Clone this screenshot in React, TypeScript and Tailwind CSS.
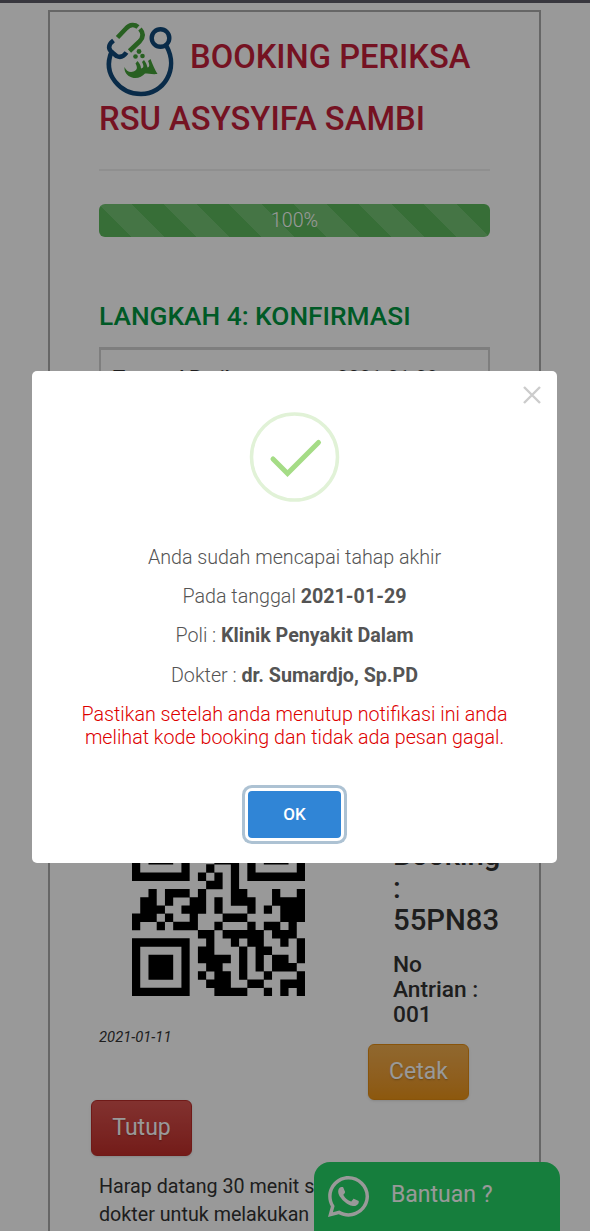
import React from "react";

const QR = [
  "111111100101001111111",
  "100000101010001000001",
  "101110100110101011101",
  "101110101001101011101",
  "101110100011101011101",
  "100000100100101000001",
  "111111101010101111111",
  "000000000110100000000",
  "001011101000110001001",
  "011010011010111001111",
  "011100111010001010111",
  "111010010001110000111",
  "100101110010001011010",
  "000000001101111101110",
  "111111100100101100101",
  "100000101100010110001",
  "101110101111010101101",
  "101110100110010101110",
  "101110101011010010001",
  "100000100111001100111",
  "111111100011110010101",
];

function QrCode() {
  return (
    <svg viewBox="0 0 21 21" className="block size-[173px]">
      <path d={QR.map((row, y) => [...row.matchAll(/1+/g)].map((m) => `M${m.index} ${y}h${m[0].length}v1.03h-${m[0].length}z`).join("")).join("")} />
    </svg>
  );
}

function Logo() {
  return (
    <svg viewBox="0 0 90 90" className="block size-[90px] shrink-0" fill="none">
      <path d="M16.500 37C7 60 26 79 46 79C69 79 84 54 71.500 31" stroke="#10497a" strokeWidth="4.600" />
      <circle cx="65.500" cy="23" r="8.800" stroke="#10497a" strokeWidth="4.400" />
      <path d="M18.500 25.500C12.500 30 13 35 18 38L21.500 41C25.500 43 29 41 31.500 37.500" stroke="#10497a" strokeWidth="4.600" />
      <path d="M22.500 22.500L31 13.500C35 9 40 9.500 43 12M45 14C49 18.500 48 23 44.500 26.500L34.500 36" stroke="#43a038" strokeWidth="4.600" />
      <path d="M29.500 52C31 56 35 58 38.500 56.500C42 55 43 53 40.500 48.500L42.500 46C44.500 48 46 51 46 53.500C49 53 49 50.500 47 47L49 45C51 47.500 52 50 52.500 52.500C55 52 54.500 49 53 46L55.500 44C57.500 49 60 55 62.500 59C57 59.500 53 58.500 50 58.500C47 62 42 64 37 62.500C32 61 29 57 29.500 52Z" fill="#43a038" />
      <circle cx="40.500" cy="41.500" r="2.300" fill="#43a038" />
      <circle cx="47.500" cy="41" r="2.300" fill="#43a038" />
      <circle cx="44" cy="36.500" r="2.400" fill="#43a038" />
    </svg>
  );
}

function WhatsApp() {
  return (
    <svg viewBox="0 0 448 512" className="h-[47px] w-[41px]" fill="currentColor">
      <path d="M380.900 97.100C339 55.100 283.200 32 223.900 32c-122.400 0-222 99.600-222 222 0 39.100 10.200 77.300 29.600 111L0 480l117.700-30.900c32.400 17.700 68.900 27 106.100 27h.1c122.300 0 224.100-99.600 224.100-222 0-59.300-25.200-115-67.100-157zm-157 341.600c-33.200 0-65.700-8.900-94-25.700l-6.700-4-69.800 18.300L72 359.200l-4.400-7c-18.500-29.400-28.200-63.300-28.200-98.200 0-101.700 82.800-184.500 184.600-184.500 49.300 0 95.600 19.200 130.400 54.100 34.800 34.900 56.200 81.200 56.100 130.500 0 101.800-84.900 184.600-186.600 184.600zm101.200-138.200c-5.500-2.800-32.800-16.200-37.900-18-5.100-1.900-8.800-2.800-12.500 2.800-3.700 5.600-14.300 18-17.600 21.800-3.200 3.700-6.500 4.200-12 1.400-32.600-16.300-54-29.100-75.500-66-5.700-9.800 5.700-9.100 16.300-30.300 1.800-3.700.9-6.900-.5-9.700-1.400-2.800-12.500-30.100-17.100-41.200-4.500-10.800-9.100-9.300-12.500-9.500-3.200-.2-6.900-.2-10.600-.2-3.700 0-9.700 1.400-14.800 6.900-5.100 5.600-19.400 19-19.400 46.300 0 27.300 19.900 53.700 22.600 57.400 2.800 3.700 39.100 59.700 94.800 83.800 35.200 15.200 49 16.500 66.600 13.900 10.700-1.600 32.800-13.400 37.400-26.400 4.600-13 4.600-24.100 3.200-26.400-1.300-2.500-5-3.900-10.500-6.600z" />
    </svg>
  );
}

function BookingPage() {
  return (
    <div className="h-[1231px] overflow-hidden bg-white px-12 pt-2.5 text-[#333]">
      <main className="h-[1300px] w-[493px] border-2 border-[#aaa] px-[49px]">
        <header className="h-[159px] border-b-2 border-[#eee] font-medium text-[#c41e3a]">
          <div className="-ml-1 flex h-[84px] items-start pt-[3px]">
            <Logo />
            <h1 className="ml-[5px] mt-[19px] text-[32.700px] leading-[46px] whitespace-nowrap">BOOKING PERIKSA</h1>
          </div>
          <div className="text-[32.800px] leading-[46px] whitespace-nowrap">RSU ASYSYIFA SAMBI</div>
        </header>
        <div className="mt-[33px] h-[33px] w-[391px] rounded-[6px] bg-[#5cb85c] bg-[linear-gradient(45deg,rgba(255,255,255,.15)_25%,transparent_25%,transparent_50%,rgba(255,255,255,.15)_50%,rgba(255,255,255,.15)_75%,transparent_75%)] bg-size-[65px_65px] text-center text-[19.700px] font-light leading-[33px] text-white">
          100%
        </div>
        <h2 className="mt-[64px] text-[26.300px] font-medium leading-[30px] whitespace-nowrap text-[#009640]">LANGKAH 4: KONFIRMASI</h2>
        <section className="mt-[16px] flex h-[463px] w-[391px] border-2 border-t-3 border-[#d2d2d2] px-[12px] pt-[14px] text-[20px] leading-7">
          <b className="w-[224px] font-medium">Tanggal Periksa</b>
          <span>2021-01-29</span>
        </section>
        <div className="mt-[13px] flex h-[277px]">
          <div className="w-[269px] shrink-0">
            <div className="pl-[33px]">
              <QrCode />
            </div>
            <div className="mt-[28.500px] text-[14.800px] italic leading-6">2021-01-11</div>
          </div>
          <div className="pl-[25px] pt-[16px] font-medium">
            <div className="text-[29.300px] leading-[32.500px]">Booking<br />:<br />55PN83</div>
            <div className="mt-[15.500px] text-[22.700px] leading-[25px]">No<br />Antrian :<br />001</div>
            <button className="-ml-[25px] mt-[17px] block h-14 w-[101px] rounded-[6px] border border-[#e38d13] bg-linear-to-b from-[#f0ad4e] to-[#eb9316] pt-px text-[23px] font-normal text-white shadow-sm text-shadow-sm">Cetak</button>
          </div>
        </div>
        <button className="-ml-2 block h-14 w-[101px] rounded-[6px] border border-[#b92c28] bg-linear-to-b from-[#d9534f] to-[#c12e2a] text-[23px] text-white shadow-sm text-shadow-sm">Tutup</button>
        <p className="mt-[16.500px] text-[19.700px] leading-7 whitespace-nowrap">
          Harap datang 30 menit sebelum<br />dokter untuk melakukan
        </p>
      </main>
    </div>
  );
}

function Modal() {
  return (
    <div className="absolute left-8 top-[371px] flex h-[492px] w-[525px] flex-col items-center rounded-[5px] bg-white text-[19.700px] font-light text-[#545454]">
      <svg viewBox="0 0 18 18" className="absolute right-4 top-[15px] size-[18px]" stroke="#ccc" strokeWidth="2.400">
        <path d="M1 1L17 17M17 1L1 17" />
      </svg>
      <svg viewBox="0 0 92 92" className="mt-[40px] size-[92px]" fill="none">
        <circle cx="45.500" cy="46" r="43" stroke="#e1f2d7" strokeWidth="3.500" />
        <path d="M24 48L38.500 62.500L69.500 31.500" stroke="#a5dc86" strokeWidth="5" strokeLinecap="round" />
      </svg>
      <div className="mt-[42.700px] flex flex-col gap-4 text-center leading-[23.300px] whitespace-nowrap">
        <p>Anda sudah mencapai tahap akhir</p>
        <p>Pada tanggal <b className="font-bold">2021-01-29</b></p>
        <p>Poli : <b className="font-bold">Klinik Penyakit Dalam</b></p>
        <p>Dokter : <b className="font-bold">dr. Sumardjo, Sp.PD</b></p>
        <p className="text-[#d00]">Pastikan setelah anda menutup notifikasi ini anda<br />melihat kode booking dan tidak ada pesan gagal.</p>
      </div>
      <button className="mt-[42px] h-[47px] w-[93px] rounded-[4px] bg-[#3085d6] text-[17px] font-medium text-white shadow-[0_0_0_3px_#fff,0_0_0_6px_#adc2d3]">OK</button>
    </div>
  );
}

export default function App() {
  return (
    <div className="relative h-[1231px] w-[590px] overflow-hidden font-[Roboto,sans-serif]">
      <BookingPage />
      <div className="absolute left-[314px] top-[1162px] flex h-[80px] w-[246px] rounded-t-[16px] bg-[#25d366] pl-[14px] pt-[11px] text-[23px] text-white">
        <WhatsApp />
        <span className="ml-[22px] mt-[6px] leading-8">Bantuan ?</span>
      </div>
      <div className="absolute inset-0 bg-black/40" />
      <div className="absolute inset-x-0 top-0 h-[3px] bg-[#38373e]" />
      <Modal />
    </div>
  );
}
